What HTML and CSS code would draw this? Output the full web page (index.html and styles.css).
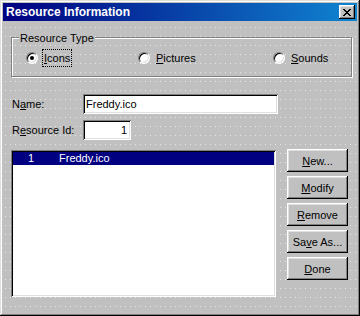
FILE: index.html
```html
<!DOCTYPE html>
<html lang="en">
<head>
  <meta charset="UTF-8">
  <title>Resource Information</title>
  <link rel="stylesheet" href="styles.css">
</head>
<body>
  <div class="window">
    <div class="titlebar">
      <span class="title">Resource Information</span>
      <button class="close-btn">
        <svg width="8" height="7" viewBox="0 0 8 7"><path fill="#000" d="M0 0h2v1h-2zM6 0h2v1h-2zM1 1h2v1h-2zM5 1h2v1h-2zM2 2h4v1h-4zM3 3h2v1h-2zM2 4h4v1h-4zM1 5h2v1h-2zM5 5h2v1h-2zM0 6h2v1h-2zM6 6h2v1h-2z"/></svg>
      </button>
    </div>

    <div class="client">
      <div class="group">
        <div class="group-label">Resource Type</div>
        <div class="radio-row">
          <label class="option"><span class="radio checked"></span><span class="opt-text focus"><u>I</u>cons</span></label>
          <label class="option"><span class="radio"></span><span class="opt-text"><u>P</u>ictures</span></label>
          <label class="option"><span class="radio"></span><span class="opt-text"><u>S</u>ounds</span></label>
        </div>
      </div>

      <div class="field-row first">
        <span class="field-label">N<u>a</u>me:</span>
        <input class="field name-field" type="text" value="Freddy.ico">
      </div>
      <div class="field-row">
        <span class="field-label">R<u>e</u>source Id:</span>
        <input class="field id-field" type="text" value="1">
      </div>

      <div class="main-row">
        <div class="listbox">
          <div class="list-item selected"><span class="item-id">1</span><span>Freddy.ico</span></div>
        </div>
        <div class="buttons">
          <button class="btn"><u>N</u>ew...</button>
          <button class="btn"><u>M</u>odify</button>
          <button class="btn"><u>R</u>emove</button>
          <button class="btn">Sa<u>v</u>e As...</button>
          <button class="btn"><u>D</u>one</button>
        </div>
      </div>
    </div>
  </div>
</body>
</html>
```

FILE: styles.css
```css
* {
  box-sizing: border-box;
}

body {
  margin: 0;
  font-family: "Liberation Sans", Arial, sans-serif;
  font-size: 11px;
  color: #000;
}

.window {
  width: 360px;
  height: 316px;
  padding: 3px;
  background: #c0c0c0;
  box-shadow: inset -1px -1px #000, inset 1px 1px #dfdfdf, inset -2px -2px #808080, inset 2px 2px #fff;
  display: flex;
  flex-direction: column;
}

.titlebar {
  flex: none;
  height: 18px;
  display: flex;
  align-items: center;
  justify-content: space-between;
  padding: 0 2px 0 3px;
  background: linear-gradient(to right, #000080, #1084d0);
  color: #fff;
}

.title {
  font-weight: bold;
  font-size: 12px;
}

.close-btn {
  width: 16px;
  height: 14px;
  padding: 0;
  border: none;
  background: #c0c0c0;
  box-shadow: inset -1px -1px #000, inset 1px 1px #fff, inset -2px -2px #808080, inset 2px 2px #dfdfdf;
  display: flex;
  align-items: center;
  justify-content: center;
}

.close-btn svg {
  display: block;
}

/* editor grid dots */
.client,
.group-label {
  background-color: #c0c0c0;
  background-image: conic-gradient(from 270deg at 1px 1px, #e6e6e6 25%, transparent 0);
  background-size: 5px 9px;
  background-attachment: fixed;
}

.client {
  flex: 1;
  padding-top: 16px;
}

.group {
  height: 40px;
  margin: 0 5px 0 8px;
  border: 1px solid #808080;
  box-shadow: inset 1px 1px #fff, 1px 1px #fff;
}

.group-label {
  width: fit-content;
  margin: -6px 0 0 7px;
  padding: 0 1px;
  line-height: 13px;
}

.radio-row {
  display: grid;
  grid-template-columns: 112px 135px auto;
  margin-top: 4px;
  padding-left: 14px;
}

.option {
  display: flex;
  align-items: center;
  height: 18px;
}

.radio {
  position: relative;
  width: 12px;
  height: 12px;
  margin-right: 4px;
  border-radius: 50%;
  background: #fff;
  border: 1px solid;
  border-color: #808080 #fff #fff #808080;
  box-shadow: inset 1px 1px #000, inset -1px -1px #dfdfdf;
}

.radio.checked::after {
  content: "";
  position: absolute;
  left: 3px;
  top: 3px;
  width: 4px;
  height: 4px;
  border-radius: 50%;
  background: #000;
}

.opt-text {
  border: 1px solid transparent;
  padding: 0 1px;
  line-height: 16px;
}

.opt-text.focus {
  border: 1px dotted #000;
}

.field-row {
  display: flex;
  align-items: center;
  margin: 6px 0 0 9px;
}

.field-row.first {
  margin-top: 17px;
}

.field-label {
  width: 71px;
}

.field {
  height: 20px;
  border: none;
  outline: none;
  background: #fff;
  font: inherit;
  padding: 0 3px;
  box-shadow: inset 1px 1px #808080, inset -1px -1px #fff, inset 2px 2px #000, inset -2px -2px #dfdfdf;
}

.name-field {
  width: 195px;
}

.id-field {
  width: 48px;
  text-align: right;
  padding-right: 4px;
}

.main-row {
  display: flex;
  align-items: flex-start;
  margin: 10px 0 0 8px;
}

.listbox {
  width: 265px;
  height: 147px;
  padding: 2px;
  background: #fff;
  box-shadow: inset 1px 1px #808080, inset -1px -1px #fff, inset 2px 2px #000, inset -2px -2px #dfdfdf;
}

.list-item {
  display: flex;
  height: 13px;
  line-height: 13px;
  padding-left: 15px;
}

.list-item.selected {
  background: #000080;
  color: #fff;
}

.item-id {
  width: 31px;
}

.buttons {
  display: flex;
  flex-direction: column;
  gap: 4px;
  margin: -1px 0 0 11px;
}

.btn {
  width: 61px;
  height: 23px;
  padding: 0;
  border: none;
  background: #c0c0c0;
  font: inherit;
  color: #000;
  box-shadow: inset -1px -1px #000, inset 1px 1px #fff, inset -2px -2px #808080, inset 2px 2px #dfdfdf;
}
```
